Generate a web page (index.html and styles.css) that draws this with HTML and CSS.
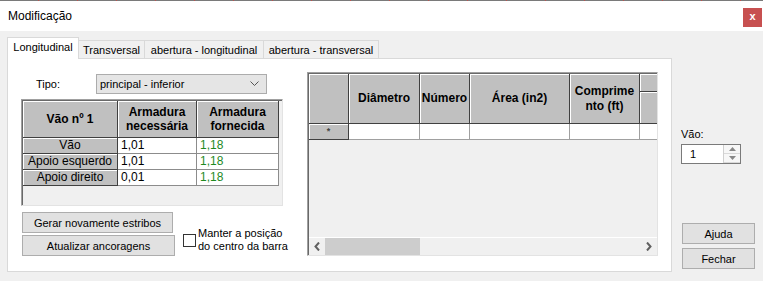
FILE: index.html
```html
<!DOCTYPE html>
<html lang="pt">
<head>
    <meta charset="UTF-8">
    <title>Modificação</title>
    <link rel="stylesheet" href="styles.css">
</head>
<body>
    <div class="topline"></div>
    <div class="titlebar">
        <span class="title">Modificação</span>
        <span class="close">x</span>
    </div>

    <div class="main">
        <div class="tabs">
            <div class="tab-strip">
                <div class="tab active tab-long">Longitudinal</div>
                <div class="tab tab-trans">Transversal</div>
                <div class="tab tab-ab-long">abertura - longitudinal</div>
                <div class="tab tab-ab-trans">abertura - transversal</div>
            </div>

            <div class="tab-page">
                <div class="left-col">
                    <div class="tipo-row">
                        <label class="tipo-label">Tipo:</label>
                        <div class="select">
                            <span>principal - inferior</span>
                            <svg width="9" height="6" viewBox="0 0 9 6"><polyline points="0.5,0.5 4.5,4.5 8.5,0.5" fill="none" stroke="#555" stroke-width="1"/></svg>
                        </div>
                    </div>

                    <div class="grid grid-left">
                        <table class="need-table">
                            <colgroup><col class="c-vao"><col class="c-nec"><col class="c-forn"></colgroup>
                            <thead>
                                <tr>
                                    <th>Vão nº 1</th>
                                    <th>Armadura<br>necessária</th>
                                    <th>Armadura<br>fornecida</th>
                                </tr>
                            </thead>
                            <tbody>
                                <tr><th>Vão</th><td>1,01</td><td class="ok">1,18</td></tr>
                                <tr><th>Apoio esquerdo</th><td>1,01</td><td class="ok">1,18</td></tr>
                                <tr><th>Apoio direito</th><td>0,01</td><td class="ok">1,18</td></tr>
                            </tbody>
                        </table>
                    </div>

                    <div class="actions">
                        <div class="btn-stack">
                            <button class="btn btn-gerar">Gerar novamente estribos</button>
                            <button class="btn btn-atualizar">Atualizar ancoragens</button>
                        </div>
                        <label class="check">
                            <span class="box"></span>
                            <span class="check-text">Manter a posição<br>do centro da barra</span>
                        </label>
                    </div>
                </div>

                <div class="grid grid-right">
                    <div class="bars-wrap">
                        <table class="bars-table">
                            <colgroup><col class="c-corner"><col class="c-diam"><col class="c-num"><col class="c-area"><col class="c-comp"><col class="c-more"></colgroup>
                            <thead>
                                <tr>
                                    <th rowspan="2"></th>
                                    <th rowspan="2">Diâmetro</th>
                                    <th rowspan="2">Número</th>
                                    <th rowspan="2">Área (in2)</th>
                                    <th rowspan="2">Comprime<br>nto (ft)</th>
                                    <th class="group"></th>
                                </tr>
                                <tr><th class="sub"></th></tr>
                            </thead>
                            <tbody>
                                <tr><th class="star">*</th><td></td><td></td><td></td><td></td><td></td></tr>
                            </tbody>
                        </table>
                    </div>
                    <div class="grid-fill"></div>
                    <div class="hscroll">
                        <div class="arrow">
                            <svg width="6" height="9" viewBox="0 0 6 9"><polyline points="5,0.5 1.5,4.5 5,8.5" fill="none" stroke="#606060" stroke-width="2"/></svg>
                        </div>
                        <div class="thumb"></div>
                        <div class="track"></div>
                        <div class="arrow">
                            <svg width="6" height="9" viewBox="0 0 6 9"><polyline points="1,0.5 4.5,4.5 1,8.5" fill="none" stroke="#606060" stroke-width="2"/></svg>
                        </div>
                    </div>
                </div>
            </div>
        </div>

        <div class="side">
            <div class="vao-label">Vão:</div>
            <div class="spinner">
                <span class="spin-value">1</span>
                <span class="spin-btns">
                    <span class="spin-btn"><svg width="7" height="4" viewBox="0 0 7 4"><polygon points="3.5,0 7,4 0,4" fill="#888"/></svg></span>
                    <span class="spin-btn"><svg width="7" height="4" viewBox="0 0 7 4"><polygon points="0,0 7,0 3.5,4" fill="#888"/></svg></span>
                </span>
            </div>
            <button class="btn side-btn btn-ajuda">Ajuda</button>
            <button class="btn side-btn">Fechar</button>
        </div>
    </div>
</body>
</html>
```

FILE: styles.css
```css
* { box-sizing: border-box; }
body { margin: 0; width: 763px; height: 281px; overflow: hidden; background: #f0f0f0; font-family: "Liberation Sans", Arial, sans-serif; font-size: 11px; color: #000; }

.topline { height: 1px; background: repeating-linear-gradient(to right, #7a7a7a 0 38px, #c0504d 38px 39px); }
.titlebar { height: 30px; background: #fff; display: flex; justify-content: space-between; padding: 0 1px 0 8px; }
.title { font-size: 12px; line-height: 30px; }
.close { width: 19px; height: 19px; margin-top: 7px; background: #c75050; color: #fff; font-weight: bold; font-size: 11px; line-height: 17px; text-align: center; }

.main { display: flex; height: 250px; padding: 6px 0 0 7px; }

/* tabs */
.tabs { width: 665px; }
.tab-strip { display: flex; align-items: flex-end; height: 21px; }
.tab { height: 18px; border: 1px solid #d9d9d9; border-bottom: none; margin-left: -1px; background: #f0f0f0; display: flex; align-items: center; justify-content: center; white-space: nowrap; }
.tab.active { height: 22px; margin-left: 0; margin-bottom: -1px; background: #fff; position: relative; padding-bottom: 4px; }
.tab-long { width: 72px; }
.tab-trans { width: 67px; }
.tab-ab-long { width: 120px; }
.tab-ab-trans { width: 116px; }
.tab-page { height: 214px; border: 1px solid #d9d9d9; background: #fff; display: flex; padding: 13px 13px 0 13px; }

/* left column */
.left-col { width: 262px; padding-top: 2px; }
.tipo-row { display: flex; align-items: center; height: 20px; }
.tipo-label { width: 75px; padding-left: 15px; }
.select { width: 171px; height: 20px; background: #e5e5e5; border: 1px solid #acacac; display: flex; align-items: center; justify-content: space-between; padding: 0 7px 0 3px; }

.grid { border: 1px solid; border-color: #a0a0a0 #e3e3e3 #e3e3e3 #a0a0a0; box-shadow: inset 1px 1px 0 #696969; background: #f0f0f0; padding: 1px 0 0 1px; }
.grid-left { height: 107px; margin-top: 5px; }

table { border-collapse: separate; border-spacing: 0; table-layout: fixed; font-size: 12px; }
th { background: #c0c0c0; border-right: 1px solid #404040; border-bottom: 1px solid #404040; box-shadow: inset 1px 1px 0 #fff; padding: 0; text-align: center; font-weight: normal; }
thead th { font-weight: bold; line-height: 14px; }
td { background: #fff; border-right: 1px solid #8c8c8c; border-bottom: 1px solid #8c8c8c; padding: 0 0 0 3px; height: 16px; line-height: 15px; }
tbody th { height: 16px; line-height: 15px; }

.need-table { width: 256px; }
.need-table thead th { height: 37px; }
.c-vao { width: 95px; }
.c-nec { width: 79px; }
.c-forn { width: 82px; }
.ok { color: #1f8a1f; }

.actions { display: flex; margin-top: 6px; }
.btn-stack { display: flex; flex-direction: column; gap: 2px; margin-left: 1px; }
.btn { background: #e1e1e1; border: 1px solid #adadad; font-family: "Liberation Sans", Arial, sans-serif; font-size: 11px; color: #000; padding: 0; height: 21px; }
.btn-gerar { width: 151px; }
.btn-atualizar { width: 153px; }
.check { display: flex; align-items: center; align-self: flex-end; margin: 0 0 3px 8px; line-height: 13px; white-space: nowrap; }
.box { width: 13px; height: 13px; flex: none; border: 1px solid #333; background: #fff; margin-right: 2px; }

/* right grid */
.grid-right { width: 351px; height: 184px; margin-left: 24px; display: flex; flex-direction: column; }
.bars-wrap { overflow: hidden; }
.bars-table { width: 391px; }
.bars-table thead th { line-height: 15px; }
.c-corner { width: 40px; }
.c-diam { width: 71px; }
.c-num { width: 50px; }
.c-area { width: 100px; }
.c-comp { width: 70px; }
.c-more { width: 60px; }
.bars-table .group { height: 18px; }
.bars-table .sub { height: 32px; }
.bars-table td { border-color: #a0a0a0; }
.star { font-size: 9px; font-weight: bold; color: #444; }
.grid-fill { flex: 1; }
.hscroll { height: 18px; border-top: 1px solid #fff; display: flex; background: #f0f0f0; }
.arrow { width: 16px; display: flex; align-items: center; justify-content: center; }
.thumb { width: 95px; background: #cdcdcd; }
.track { flex: 1; }

/* side */
.side { width: 91px; padding: 91px 0 0 9px; display: flex; flex-direction: column; }
.vao-label { line-height: 13px; }
.spinner { width: 60px; height: 20px; margin-top: 3px; border: 1px solid #7a7a7a; background: #fff; display: flex; }
.spin-value { flex: 1; padding-left: 8px; line-height: 18px; }
.spin-btns { width: 17px; display: flex; flex-direction: column; border-left: 1px solid #d0d0d0; }
.spin-btn { flex: 1; display: flex; align-items: center; justify-content: center; background: #f7f7f7; border-bottom: 1px solid #d9d9d9; }
.side-btn { width: 73px; margin-left: 1px; }
.btn-ajuda { margin-top: 59px; margin-bottom: 4px; }
```
